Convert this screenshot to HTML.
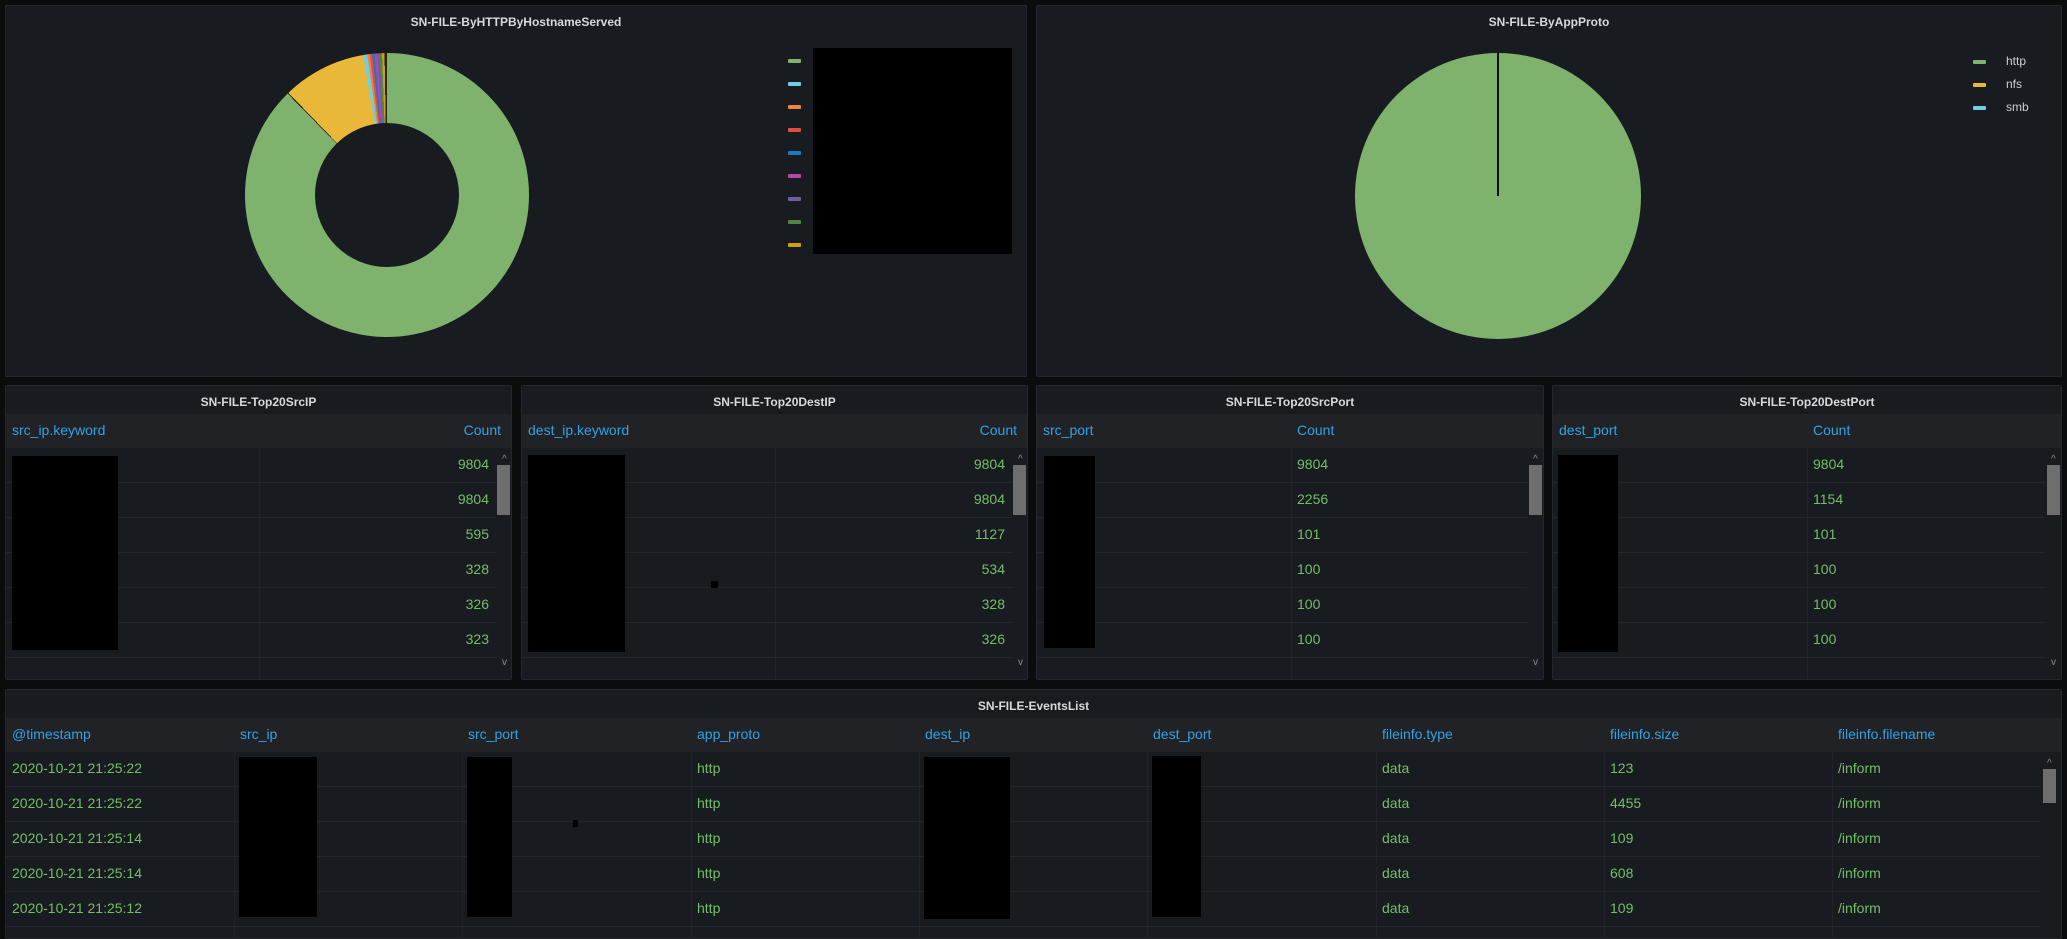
<!DOCTYPE html>
<html><head><meta charset="utf-8"><style>
*{margin:0;padding:0;box-sizing:border-box}
body{width:2067px;height:930px;background:#0b0c0e;position:relative;overflow:hidden;font-family:"Liberation Sans",sans-serif;font-size:14px;color:#c7d0d9}
.p{position:absolute;background:#181b1f;border:1px solid #25272c;border-radius:2px;overflow:hidden}
.t{position:absolute;left:0;right:0;top:9px;text-align:center;font-weight:bold;font-size:12px;color:#d8d9da}
.a{position:absolute}
.hd{position:absolute;left:0;right:0;top:28px;height:34px;background:#202226}
.bl{color:#33a2e5}
.g{color:#73bf69}
.blk{position:absolute;background:#000}
.line{position:absolute;height:1px;background:#24262b}
.vl{position:absolute;width:1px;background:#202226}
.sb{position:absolute;width:13px;background:#6e6e6e}
.ar{position:absolute;font-size:10px;color:#8e8e8e}
.lg{position:absolute;width:13px;height:4px;border-radius:1px}
</style></head><body>

<!-- Panel 1 -->
<div class="p" style="left:5px;top:5px;width:1022px;height:372px">
<div class="t">SN-FILE-ByHTTPByHostnameServed</div>
<div class="a" style="left:239px;top:47px;width:284px;height:284px;border-radius:50%;background:conic-gradient(#7eb26d 0 315.6deg,#111 315.6deg 316deg,#eab839 316deg 350.3deg,#6ed0e0 350.3deg 352deg,#ef843c 352deg 353deg,#e24d42 353deg 354deg,#1f78c1 354deg 355deg,#ba43a9 355deg 356deg,#705da0 356deg 357deg,#508642 357deg 358deg,#cca300 358deg 359deg,#222 359deg 360deg)"></div>
<div class="a" style="left:309px;top:117px;width:144px;height:144px;border-radius:50%;background:#181b1f"></div>
<div class="lg" style="left:782px;top:53px;background:#7eb26d"></div>
<div class="lg" style="left:782px;top:76px;background:#6ed0e0"></div>
<div class="lg" style="left:782px;top:99px;background:#ef843c"></div>
<div class="lg" style="left:782px;top:122px;background:#e24d42"></div>
<div class="lg" style="left:782px;top:145px;background:#1f78c1"></div>
<div class="lg" style="left:782px;top:168px;background:#ba43a9"></div>
<div class="lg" style="left:782px;top:191px;background:#705da0"></div>
<div class="lg" style="left:782px;top:214px;background:#508642"></div>
<div class="lg" style="left:782px;top:237px;background:#cca300"></div>
<div class="blk" style="left:807px;top:42px;width:199px;height:206px"></div>
</div>

<!-- Panel 2 -->
<div class="p" style="left:1036px;top:5px;width:1026px;height:372px">
<div class="t">SN-FILE-ByAppProto</div>
<div class="a" style="left:318px;top:47px;width:286px;height:286px;border-radius:50%;background:#7eb26d"></div>
<div class="a" style="left:460px;top:47px;width:2px;height:143px;background:#111"></div>
<div class="lg" style="left:936px;top:54px;background:#7eb26d"></div>
<div class="lg" style="left:936px;top:77px;background:#eab839"></div>
<div class="lg" style="left:936px;top:100px;background:#6ed0e0"></div>
<div class="a" style="left:969px;top:48px;font-size:12px">http</div>
<div class="a" style="left:969px;top:71px;font-size:12px">nfs</div>
<div class="a" style="left:969px;top:94px;font-size:12px">smb</div>
</div>

<!-- Row 2 tables -->
<div class="p" style="left:5px;top:385px;width:507px;height:295px">
<div class="t">SN-FILE-Top20SrcIP</div>
<div class="hd"></div><div class="vl" style="left:253px;top:28px;height:267px"></div>
<div class="a bl" style="left:6px;top:36px">src_ip.keyword</div>
<div class="a bl" style="right:10px;top:36px">Count</div>
<div class="line" style="left:0;width:490px;top:96px"></div><div class="line" style="left:0;width:490px;top:131px"></div><div class="line" style="left:0;width:490px;top:166px"></div><div class="line" style="left:0;width:490px;top:201px"></div><div class="line" style="left:0;width:490px;top:236px"></div><div class="line" style="left:0;width:490px;top:271px"></div>
<div class="a g" style="right:22px;top:70px">9804</div><div class="a g" style="right:22px;top:105px">9804</div><div class="a g" style="right:22px;top:140px">595</div><div class="a g" style="right:22px;top:175px">328</div><div class="a g" style="right:22px;top:210px">326</div><div class="a g" style="right:22px;top:245px">323</div>
<div class="blk" style="left:6px;top:70px;width:106px;height:194px"></div>
<div class="ar" style="left:496px;top:68px">^</div><div class="sb" style="left:491px;top:79px;height:50px"></div><div class="ar" style="left:496px;top:271px">v</div>
</div>

<div class="p" style="left:521px;top:385px;width:507px;height:295px">
<div class="t">SN-FILE-Top20DestIP</div>
<div class="hd"></div><div class="vl" style="left:253px;top:28px;height:267px"></div>
<div class="a bl" style="left:6px;top:36px">dest_ip.keyword</div>
<div class="a bl" style="right:10px;top:36px">Count</div>
<div class="line" style="left:0;width:490px;top:96px"></div><div class="line" style="left:0;width:490px;top:131px"></div><div class="line" style="left:0;width:490px;top:166px"></div><div class="line" style="left:0;width:490px;top:201px"></div><div class="line" style="left:0;width:490px;top:236px"></div><div class="line" style="left:0;width:490px;top:271px"></div>
<div class="a g" style="right:22px;top:70px">9804</div><div class="a g" style="right:22px;top:105px">9804</div><div class="a g" style="right:22px;top:140px">1127</div><div class="a g" style="right:22px;top:175px">534</div><div class="a g" style="right:22px;top:210px">328</div><div class="a g" style="right:22px;top:245px">326</div>
<div class="blk" style="left:6px;top:69px;width:97px;height:197px"></div>
<div class="blk" style="left:189px;top:195px;width:7px;height:7px"></div>
<div class="ar" style="left:496px;top:68px">^</div><div class="sb" style="left:491px;top:79px;height:50px"></div><div class="ar" style="left:496px;top:271px">v</div>
</div>

<div class="p" style="left:1036px;top:385px;width:508px;height:295px">
<div class="t">SN-FILE-Top20SrcPort</div>
<div class="hd"></div><div class="vl" style="left:254px;top:28px;height:267px"></div>
<div class="a bl" style="left:6px;top:36px">src_port</div>
<div class="a bl" style="left:260px;top:36px">Count</div>
<div class="line" style="left:0;width:490px;top:96px"></div><div class="line" style="left:0;width:490px;top:131px"></div><div class="line" style="left:0;width:490px;top:166px"></div><div class="line" style="left:0;width:490px;top:201px"></div><div class="line" style="left:0;width:490px;top:236px"></div><div class="line" style="left:0;width:490px;top:271px"></div>
<div class="a g" style="left:260px;top:70px">9804</div><div class="a g" style="left:260px;top:105px">2256</div><div class="a g" style="left:260px;top:140px">101</div><div class="a g" style="left:260px;top:175px">100</div><div class="a g" style="left:260px;top:210px">100</div><div class="a g" style="left:260px;top:245px">100</div>
<div class="blk" style="left:7px;top:70px;width:51px;height:192px"></div>
<div class="ar" style="left:496px;top:68px">^</div><div class="sb" style="left:492px;top:79px;height:50px"></div><div class="ar" style="left:496px;top:271px">v</div>
</div>

<div class="p" style="left:1552px;top:385px;width:510px;height:295px">
<div class="t">SN-FILE-Top20DestPort</div>
<div class="hd"></div><div class="vl" style="left:254px;top:28px;height:267px"></div>
<div class="a bl" style="left:6px;top:36px">dest_port</div>
<div class="a bl" style="left:260px;top:36px">Count</div>
<div class="line" style="left:0;width:492px;top:96px"></div><div class="line" style="left:0;width:492px;top:131px"></div><div class="line" style="left:0;width:492px;top:166px"></div><div class="line" style="left:0;width:492px;top:201px"></div><div class="line" style="left:0;width:492px;top:236px"></div><div class="line" style="left:0;width:492px;top:271px"></div>
<div class="a g" style="left:260px;top:70px">9804</div><div class="a g" style="left:260px;top:105px">1154</div><div class="a g" style="left:260px;top:140px">101</div><div class="a g" style="left:260px;top:175px">100</div><div class="a g" style="left:260px;top:210px">100</div><div class="a g" style="left:260px;top:245px">100</div>
<div class="blk" style="left:5px;top:69px;width:60px;height:197px"></div>
<div class="ar" style="left:498px;top:68px">^</div><div class="sb" style="left:494px;top:79px;height:50px"></div><div class="ar" style="left:498px;top:271px">v</div>
</div>

<!-- Events list -->
<div class="p" style="left:5px;top:689px;width:2057px;height:250px">
<div class="t">SN-FILE-EventsList</div>
<div class="hd"></div>
<div class="vl" style="left:228px;top:28px;height:230px"></div><div class="vl" style="left:456px;top:28px;height:230px"></div><div class="vl" style="left:685px;top:28px;height:230px"></div><div class="vl" style="left:913px;top:28px;height:230px"></div><div class="vl" style="left:1141px;top:28px;height:230px"></div><div class="vl" style="left:1370px;top:28px;height:230px"></div><div class="vl" style="left:1598px;top:28px;height:230px"></div><div class="vl" style="left:1826px;top:28px;height:230px"></div>
<div class="a bl" style="left:6px;top:36px">@timestamp</div>
<div class="a bl" style="left:234px;top:36px">src_ip</div>
<div class="a bl" style="left:462px;top:36px">src_port</div>
<div class="a bl" style="left:691px;top:36px">app_proto</div>
<div class="a bl" style="left:919px;top:36px">dest_ip</div>
<div class="a bl" style="left:1147px;top:36px">dest_port</div>
<div class="a bl" style="left:1376px;top:36px">fileinfo.type</div>
<div class="a bl" style="left:1604px;top:36px">fileinfo.size</div>
<div class="a bl" style="left:1832px;top:36px">fileinfo.filename</div>
<div class="line" style="left:0;width:2035px;top:96px"></div><div class="line" style="left:0;width:2035px;top:131px"></div><div class="line" style="left:0;width:2035px;top:166px"></div><div class="line" style="left:0;width:2035px;top:201px"></div><div class="line" style="left:0;width:2035px;top:236px"></div>
<div class="a g" style="left:6px;top:70px">2020-10-21 21:25:22</div><div class="a g" style="left:6px;top:105px">2020-10-21 21:25:22</div><div class="a g" style="left:6px;top:140px">2020-10-21 21:25:14</div><div class="a g" style="left:6px;top:175px">2020-10-21 21:25:14</div><div class="a g" style="left:6px;top:210px">2020-10-21 21:25:12</div>
<div class="a g" style="left:691px;top:70px">http</div><div class="a g" style="left:691px;top:105px">http</div><div class="a g" style="left:691px;top:140px">http</div><div class="a g" style="left:691px;top:175px">http</div><div class="a g" style="left:691px;top:210px">http</div>
<div class="a g" style="left:1376px;top:70px">data</div><div class="a g" style="left:1376px;top:105px">data</div><div class="a g" style="left:1376px;top:140px">data</div><div class="a g" style="left:1376px;top:175px">data</div><div class="a g" style="left:1376px;top:210px">data</div>
<div class="a g" style="left:1604px;top:70px">123</div><div class="a g" style="left:1604px;top:105px">4455</div><div class="a g" style="left:1604px;top:140px">109</div><div class="a g" style="left:1604px;top:175px">608</div><div class="a g" style="left:1604px;top:210px">109</div>
<div class="a g" style="left:1832px;top:70px">/inform</div><div class="a g" style="left:1832px;top:105px">/inform</div><div class="a g" style="left:1832px;top:140px">/inform</div><div class="a g" style="left:1832px;top:175px">/inform</div><div class="a g" style="left:1832px;top:210px">/inform</div>
<div class="blk" style="left:233px;top:67px;width:78px;height:160px"></div>
<div class="blk" style="left:461px;top:67px;width:45px;height:160px"></div>
<div class="blk" style="left:567px;top:130px;width:5px;height:7px"></div>
<div class="blk" style="left:918px;top:67px;width:86px;height:162px"></div>
<div class="blk" style="left:1146px;top:66px;width:49px;height:161px"></div>
<div class="ar" style="left:2041px;top:68px">^</div><div class="sb" style="left:2037px;top:79px;height:34px"></div>
</div>
</body></html>
